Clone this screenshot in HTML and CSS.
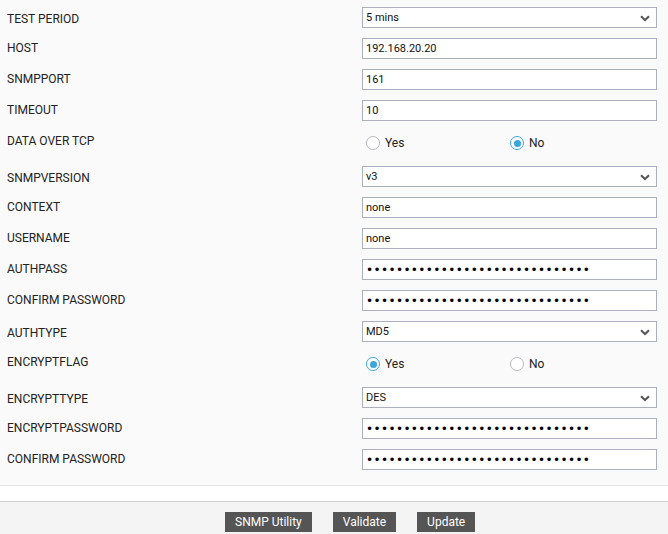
FILE: index.html
```html
<!DOCTYPE html>
<html>
<head>
<meta charset="utf-8">
<link rel="stylesheet" href="styles.css">
</head>
<body>
<div class="form">
  <div class="row srow"><div class="label">TEST PERIOD</div><div class="ctl sel"><span class="val">5 mins</span><svg class="chev" viewBox="0 0 10 7" width="10" height="7"><path d="M1 1.2 L5 5 L9 1.2" fill="none" stroke="#555" stroke-width="2"/></svg></div></div>
  <div class="row irow"><div class="label">HOST</div><input class="ctl txt" type="text" value="192.168.20.20"></div>
  <div class="row irow"><div class="label">SNMPPORT</div><input class="ctl txt" type="text" value="161"></div>
  <div class="row irow"><div class="label">TIMEOUT</div><input class="ctl txt" type="text" value="10"></div>
  <div class="row radio-row"><div class="label">DATA OVER TCP</div>
    <div class="radios">
      <label class="opt"><span class="rb"></span>Yes</label>
      <label class="opt"><span class="rb on"></span>No</label>
    </div>
  </div>
  <div class="row srow"><div class="label">SNMPVERSION</div><div class="ctl sel"><span class="val">v3</span><svg class="chev" viewBox="0 0 10 7" width="10" height="7"><path d="M1 1.2 L5 5 L9 1.2" fill="none" stroke="#555" stroke-width="2"/></svg></div></div>
  <div class="row irow"><div class="label">CONTEXT</div><input class="ctl txt" type="text" value="none"></div>
  <div class="row irow"><div class="label">USERNAME</div><input class="ctl txt" type="text" value="none"></div>
  <div class="row irow"><div class="label">AUTHPASS</div><input class="ctl txt pw" type="password" value="aaaaaaaaaaaaaaaaaaaaaaaaaaaaaa"></div>
  <div class="row irow"><div class="label">CONFIRM PASSWORD</div><input class="ctl txt pw" type="password" value="aaaaaaaaaaaaaaaaaaaaaaaaaaaaaa"></div>
  <div class="row srow"><div class="label">AUTHTYPE</div><div class="ctl sel"><span class="val">MD5</span><svg class="chev" viewBox="0 0 10 7" width="10" height="7"><path d="M1 1.2 L5 5 L9 1.2" fill="none" stroke="#555" stroke-width="2"/></svg></div></div>
  <div class="row radio-row"><div class="label">ENCRYPTFLAG</div>
    <div class="radios">
      <label class="opt"><span class="rb on"></span>Yes</label>
      <label class="opt"><span class="rb"></span>No</label>
    </div>
  </div>
  <div class="row srow"><div class="label">ENCRYPTTYPE</div><div class="ctl sel"><span class="val">DES</span><svg class="chev" viewBox="0 0 10 7" width="10" height="7"><path d="M1 1.2 L5 5 L9 1.2" fill="none" stroke="#555" stroke-width="2"/></svg></div></div>
  <div class="row irow"><div class="label">ENCRYPTPASSWORD</div><input class="ctl txt pw" type="password" value="aaaaaaaaaaaaaaaaaaaaaaaaaaaaaa"></div>
  <div class="row irow"><div class="label">CONFIRM PASSWORD</div><input class="ctl txt pw" type="password" value="aaaaaaaaaaaaaaaaaaaaaaaaaaaaaa"></div>
</div>
<div class="band"></div>
<div class="footer">
  <button class="btn">SNMP Utility</button>
  <button class="btn">Validate</button>
  <button class="btn">Update</button>
</div>
</body>
</html>
```
FILE: styles.css
```css
html, body {
  margin: 0;
  padding: 0;
}
body {
  background: #fafafa;
  font-family: Roboto, "Liberation Sans", sans-serif;
  font-size: 12px;
  color: #222;
  width: 668px;
  height: 534px;
  overflow: hidden;
}
.form {
  padding: 7px 11px 5px 0;
  border-bottom: 1px solid #e3e3e3;
}
.row {
  display: flex;
  align-items: center;
  height: 21px;
  margin-bottom: 10px;
}
.label {
  width: 355px;
  padding-left: 7px;
  line-height: 14px;
  flex: none;
}
.irow .label {
  padding-bottom: 2px;
}
.srow .label {
  padding-top: 2px;
}
.ctl {
  box-sizing: border-box;
  width: 295px;
  height: 21px;
  border: 1px solid #aab0bf;
  background: #fff;
  flex: none;
  margin: 0;
  font-family: Roboto, "Liberation Sans", sans-serif;
  font-size: 11px;
  color: #111;
  padding: 0 3px;
}
.txt {
  outline: none;
}
.sel {
  position: relative;
  display: flex;
  align-items: center;
}
.chev {
  position: absolute;
  right: 6px;
  top: 7px;
}
.pw {
  font-family: "DejaVu Sans", sans-serif;
  font-size: 12px;
  letter-spacing: 0.4px;
  color: #000;
}
.radio-row {
  height: 25px;
  align-items: flex-start;
}
.radio-row .label {
  padding-top: 3px;
}
.radios {
  display: grid;
  grid-template-columns: 144px 151px;
  width: 295px;
}
.opt {
  display: flex;
  align-items: center;
  padding-left: 4px;
  margin-top: 5px;
  font-size: 12px;
  color: #222;
  line-height: 14px;
}
.rb {
  box-sizing: border-box;
  width: 14px;
  height: 14px;
  border-radius: 50%;
  border: 1px solid #b5b8bf;
  background: #fff;
  margin-right: 5px;
  display: flex;
  align-items: center;
  justify-content: center;
}
.rb.on {
  border-color: #3aa6dc;
}
.rb.on::after {
  content: "";
  width: 7px;
  height: 7px;
  border-radius: 50%;
  background: #3aa6dc;
}
.band {
  height: 15px;
  background: #fff;
  border-bottom: 1px solid #cfcfcf;
}
.footer {
  background: #f4f4f4;
  padding: 10px 0 0 225px;
  display: flex;
  gap: 21px;
  height: 32px;
  box-sizing: border-box;
}
.btn {
  height: 20px;
  background: #555;
  color: #fff;
  border: none;
  border-radius: 0;
  font-family: Roboto, "Liberation Sans", sans-serif;
  font-size: 12px;
  padding: 0 10px;
  margin: 0;
  line-height: 20px;
}
```
